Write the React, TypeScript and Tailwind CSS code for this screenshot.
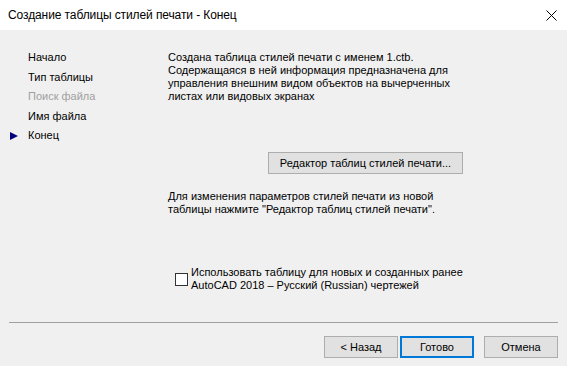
import React from 'react'

const steps = [
  { label: 'Начало', disabled: false },
  { label: 'Тип таблицы', disabled: false },
  { label: 'Поиск файла', disabled: true },
  { label: 'Имя файла', disabled: false },
  { label: 'Конец', disabled: false, current: true },
]

function WinButton({ children, primary, className = '' }: { children: React.ReactNode; primary?: boolean; className?: string }) {
  return (
    <button
      className={`h-[22px] bg-[#e1e1e1] text-black text-[11px] leading-none flex items-center justify-center ${
        primary ? 'border-2 border-[#0078d7]' : 'border border-[#adadad]'
      } ${className}`}
    >
      {children}
    </button>
  )
}

export default function App() {
  return (
    <div
      className="w-[567px] h-[366px] flex flex-col bg-[#f0f0f0] text-black overflow-hidden"
      style={{ fontFamily: '"Liberation Sans", Arial, sans-serif' }}
    >
      {/* заголовок окна */}
      <div className="h-[30px] bg-white flex items-center justify-between pl-[8px] pr-[9px]">
        <span className="text-[12px] tracking-[-0.1px]">Создание таблицы стилей печати - Конец</span>
        <svg width="11" height="11" viewBox="0 0 11 11" className="mr-[1px]">
          <path d="M0.5 0.5L10.5 10.5M10.5 0.5L0.5 10.5" stroke="#000" strokeWidth="1" />
        </svg>
      </div>

      {/* основная часть */}
      <div className="h-[292px] flex">
        {/* шаги мастера */}
        <div className="w-[168px] pt-[18px] text-[11px] leading-[19.5px]">
          {steps.map(s => (
            <div key={s.label} className="flex items-center">
              <span className="w-[28px] flex justify-start pl-[10px]">
                {s.current && (
                  <svg width="8" height="8" viewBox="0 0 8 8">
                    <path d="M0 0L8 4L0 8Z" fill="#000080" />
                  </svg>
                )}
              </span>
              <span className={s.disabled ? 'text-[#a0a0a0]' : ''}>{s.label}</span>
            </div>
          ))}
        </div>

        {/* содержимое */}
        <div className="flex-1 flex flex-col text-[11px] leading-[13px] pt-[21px]">
          <p className="w-[300px]">
            Создана таблица стилей печати с именем 1.ctb.
            <br />
            Содержащаяся в ней информация предназначена для
            <br />
            управления внешним видом объектов на вычерченных
            <br />
            листах или видовых экранах
          </p>

          <WinButton className="mt-[49px] ml-[100px] w-[195px]">Редактор таблиц стилей печати...</WinButton>

          <p className="mt-[16px]">
            Для изменения параметров стилей печати из новой
            <br />
            таблицы нажмите "Редактор таблиц стилей печати".
          </p>

          <div className="mt-[50px] ml-[7px] flex items-center gap-[3px]">
            <span className="w-[13px] h-[13px] border border-[#333] bg-white shrink-0" />
            <span className="leading-[13px]">
              Использовать таблицу для новых и созданных ранее
              <br />
              AutoCAD 2018 – Русский (Russian) чертежей
            </span>
          </div>
        </div>
      </div>

      {/* разделитель и кнопки */}
      <div className="mx-[9px] h-px bg-[#a0a0a0]" />
      <div className="mt-[13px] flex justify-end pr-[9px]">
        <WinButton className="w-[74px]">&lt; Назад</WinButton>
        <WinButton primary className="ml-[2px] w-[74px]">Готово</WinButton>
        <WinButton className="ml-[10px] w-[74px]">Отмена</WinButton>
      </div>
    </div>
  )
}
